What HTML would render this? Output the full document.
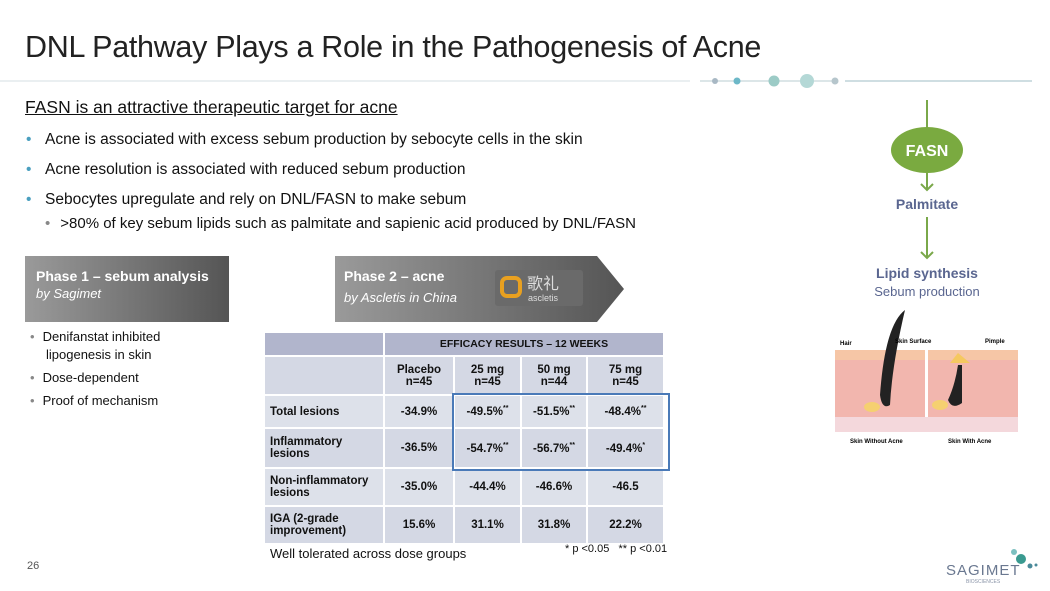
<!DOCTYPE html>
<html><head><meta charset="utf-8"><style>
body{margin:0;width:1050px;height:591px;background:#fff;font-family:"Liberation Sans",sans-serif;position:relative;overflow:hidden;color:#111}
.a{position:absolute}
h1{position:absolute;left:25px;top:30px;margin:0;font-weight:normal;font-size:30.5px;color:#222;letter-spacing:-0.3px}
.b{position:absolute;left:28px;font-size:15.5px;color:#111}
.b:before{content:"•";color:#4a9fbf;position:absolute;left:-2px}
.b span{margin-left:17px}
table{border-collapse:separate;border-spacing:2px;font-size:11.5px;font-weight:bold;text-align:center}
td{background:#dde1ea;padding:0}
td.l{text-align:left;padding-left:5px}
.hd td{background:#b1b5cc}
.sub td{background:#d4d8e4}
.alt td{background:#d4d8e4}
sup{font-size:7px}
.sb{position:absolute;left:30px;font-size:13px}
.sb:before{content:"•";color:#888;margin-right:8px}
</style></head><body>
<h1>DNL Pathway Plays a Role in the Pathogenesis of Acne</h1>
<svg class="a" style="left:0;top:70px" width="1050" height="22">
<line x1="0" y1="11" x2="690" y2="11" stroke="#d4dfe3" stroke-width="1"/>
<line x1="845" y1="11" x2="1032" y2="11" stroke="#9fbec4" stroke-width="1"/>
<line x1="700" y1="11" x2="835" y2="11" stroke="#b8ccd2" stroke-width="1"/>
<circle cx="715" cy="11" r="3" fill="#a8b8c4"/><circle cx="737" cy="11" r="3.5" fill="#6db8c8"/>
<circle cx="774" cy="11" r="5.5" fill="#9ccbc6"/><circle cx="807" cy="11" r="7" fill="#b4d8d6"/><circle cx="835" cy="11" r="3.5" fill="#b6c6cc"/>
</svg>
<div class="a" style="left:25px;top:97px;font-size:17.5px;text-decoration:underline">FASN is an attractive therapeutic target for acne</div>
<div class="b" style="top:131px"><span>Acne is associated with excess sebum production by sebocyte cells in the skin</span></div>
<div class="b" style="top:161px"><span>Acne resolution is associated with reduced sebum production</span></div>
<div class="b" style="top:191px"><span>Sebocytes upregulate and rely on DNL/FASN to make sebum</span></div>
<div class="a" style="left:45px;top:215px;font-size:15px"><span style="color:#888;margin-right:10px">•</span>&gt;80% of key sebum lipids such as palmitate and sapienic acid produced by DNL/FASN</div>

<div class="a" style="left:25px;top:256px;width:204px;height:66px;background:linear-gradient(90deg,#9a9a9a,#555);color:#fff">
<div style="margin:12px 0 0 11px;font-weight:bold;font-size:14px">Phase 1 – sebum analysis</div>
<div style="margin:2px 0 0 11px;font-style:italic;font-size:13px">by Sagimet</div></div>
<svg class="a" style="left:335px;top:256px" width="290" height="67"><defs><linearGradient id="g"><stop offset="0" stop-color="#9a9a9a"/><stop offset="1" stop-color="#555"/></linearGradient></defs>
<polygon points="0,0 262,0 289,33 262,66 0,66" fill="url(#g)"/>
<rect x="160" y="14" width="88" height="36" rx="3" fill="#6a6a6a"/>
<rect x="167" y="22" width="18" height="18" rx="5" fill="none" stroke="#e8a020" stroke-width="4"/>
<text x="192" y="33" fill="#ddd" font-size="16" font-family="Noto Sans CJK SC">歌礼</text>
<text x="193" y="45" fill="#ddd" font-size="9">ascletis</text></svg>
<div class="a" style="left:344px;top:268px;color:#fff;font-weight:bold;font-size:14px">Phase 2 – acne</div>
<div class="a" style="left:344px;top:290px;color:#fff;font-style:italic;font-size:13px">by Ascletis in China</div>

<div class="sb" style="top:329px">Denifanstat inhibited</div>
<div class="a" style="left:46px;top:347px;font-size:13px">lipogenesis in skin</div>
<div class="sb" style="top:370px">Dose-dependent</div>
<div class="sb" style="top:393px">Proof of mechanism</div>

<table class="a" style="left:263px;top:331px;width:402px">
<tr class="hd" style="height:22px"><td style="width:118px"></td><td colspan="4" style="font-size:10.5px">EFFICACY RESULTS – 12 WEEKS</td></tr>
<tr class="sub" style="height:37px"><td></td><td style="width:68px">Placebo<br>n=45</td><td style="width:65px">25 mg<br>n=45</td><td style="width:64px">50 mg<br>n=44</td><td>75 mg<br>n=45</td></tr>
<tr style="height:31px"><td class="l">Total lesions</td><td>-34.9%</td><td>-49.5%<sup>**</sup></td><td>-51.5%<sup>**</sup></td><td>-48.4%<sup>**</sup></td></tr>
<tr class="alt" style="height:38px"><td class="l">Inflammatory<br>lesions</td><td>-36.5%</td><td>-54.7%<sup>**</sup></td><td>-56.7%<sup>**</sup></td><td>-49.4%<sup>*</sup></td></tr>
<tr style="height:36px"><td class="l">Non-inflammatory<br>lesions</td><td>-35.0%</td><td>-44.4%</td><td>-46.6%</td><td>-46.5</td></tr>
<tr class="alt" style="height:36px"><td class="l">IGA (2-grade<br>improvement)</td><td>15.6%</td><td>31.1%</td><td>31.8%</td><td>22.2%</td></tr>
</table>
<div class="a" style="left:452px;top:393px;width:214px;height:74px;border:2px solid #4a7ab8"></div>
<div class="a" style="left:270px;top:546px;font-size:13px">Well tolerated across dose groups</div>
<div class="a" style="left:565px;top:543px;font-size:11px">* p &lt;0.05 &nbsp; ** p &lt;0.01</div>
<div class="a" style="left:27px;top:560px;font-size:11px;color:#555">26</div>

<svg class="a" style="left:860px;top:100px" width="150" height="200">
<line x1="67" y1="0" x2="67" y2="30" stroke="#7aa84a" stroke-width="2"/>
<ellipse cx="67" cy="50" rx="36" ry="23" fill="#7aaa40"/>
<text x="67" y="56" text-anchor="middle" fill="#fff" font-weight="bold" font-size="16" font-family="Liberation Sans">FASN</text>
<line x1="67" y1="73" x2="67" y2="90" stroke="#7aa84a" stroke-width="2"/><polyline points="61,84 67,90 73,84" fill="none" stroke="#7aa84a" stroke-width="2"/>
<text x="67" y="109" text-anchor="middle" fill="#5a6690" font-weight="bold" font-size="14" font-family="Liberation Sans">Palmitate</text>
<line x1="67" y1="117" x2="67" y2="158" stroke="#7aa84a" stroke-width="2"/><polyline points="61,152 67,158 73,152" fill="none" stroke="#7aa84a" stroke-width="2"/>
<text x="67" y="178" text-anchor="middle" fill="#5a6690" font-weight="bold" font-size="14" font-family="Liberation Sans">Lipid synthesis</text>
<text x="67" y="196" text-anchor="middle" fill="#5a6690" font-size="13" font-family="Liberation Sans">Sebum production</text>
</svg>
<svg class="a" style="left:830px;top:305px" width="200" height="145">
<rect x="5" y="45" width="90" height="82" fill="#f2b6ae"/><rect x="98" y="45" width="90" height="82" fill="#f2b6ae"/>
<rect x="5" y="45" width="90" height="10" fill="#f6c6a6"/><rect x="98" y="45" width="90" height="10" fill="#f6c6a6"/>
<rect x="5" y="112" width="183" height="15" fill="#f4d8dc"/>
<path d="M75,5 Q55,20 50,90 Q52,105 60,100 Q62,60 75,5" fill="#222"/>
<path d="M128,60 Q125,80 118,95 Q122,105 132,98 Q132,80 132,60z" fill="#222"/>
<path d="M120,58 L128,48 L140,58z" fill="#f5c860"/>
<ellipse cx="42" cy="102" rx="8" ry="5" fill="#f5d070"/><ellipse cx="110" cy="100" rx="8" ry="5" fill="#f5d070"/>
<text x="10" y="40" font-size="6" font-family="Liberation Sans" font-weight="bold">Hair</text>
<text x="65" y="38" font-size="6" font-family="Liberation Sans" font-weight="bold">Skin Surface</text>
<text x="155" y="38" font-size="6" font-family="Liberation Sans" font-weight="bold">Pimple</text>
<text x="20" y="138" font-size="6" font-family="Liberation Sans" font-weight="bold">Skin Without Acne</text>
<text x="118" y="138" font-size="6" font-family="Liberation Sans" font-weight="bold">Skin With Acne</text>
</svg>
<svg class="a" style="left:940px;top:545px" width="100" height="40">
<circle cx="74" cy="7" r="3" fill="#7cc0c0"/><circle cx="81" cy="14" r="5" fill="#3a9a90"/><circle cx="90" cy="21" r="2.5" fill="#4a8a9a"/><circle cx="96" cy="20" r="1.5" fill="#4a8a9a"/>
<text x="6" y="30" font-size="15" fill="#6a7890" font-family="Liberation Sans" letter-spacing="1">SAGIMET</text>
<text x="26" y="38" font-size="5" fill="#8a94a8" font-family="Liberation Sans">BIOSCIENCES</text>
</svg>
</body></html>
